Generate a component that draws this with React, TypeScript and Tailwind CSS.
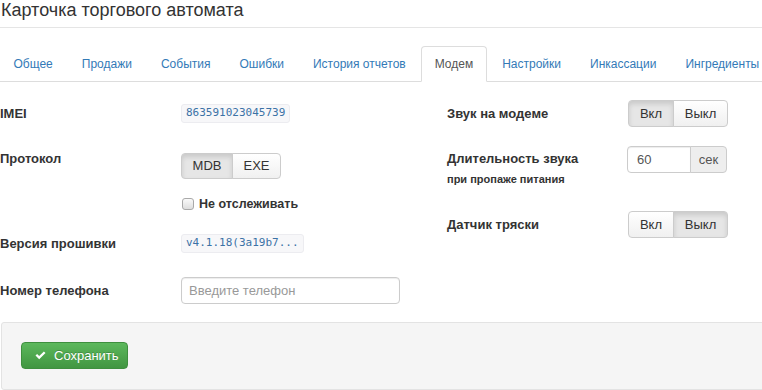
import React from 'react';

const tabs = ['Общее', 'Продажи', 'События', 'Ошибки', 'История отчетов', 'Модем', 'Настройки', 'Инкассации', 'Ингредиенты'];

const Code = ({ children }: { children: React.ReactNode }) => (
    <span className="inline-flex h-[19px] items-center rounded-[3px] border border-[#ececf0] bg-[#f7f7f9] px-[4px] font-['DejaVu_Sans_Mono',monospace] text-[11px] text-[#3b72a6]">
        {children}
    </span>
);

const Toggle = ({ options, active, widths }: { options: string[]; active: number; widths: string[] }) => (
    <div className="flex h-[27px]">
        {options.map((o, i) => (
            <button
                key={o}
                className={
                    'flex items-center justify-center border border-[#ccc] text-[13px] text-[#333] ' +
                    widths[i] +
                    (i === 0 ? ' rounded-l-[4px]' : ' -ml-px rounded-r-[4px]') +
                    (i === active
                        ? ' bg-[#e6e6e6] shadow-[inset_0_3px_5px_rgba(0,0,0,0.125)]'
                        : ' bg-gradient-to-b from-white to-[#f0f0f0]')
                }
            >
                {o}
            </button>
        ))}
    </div>
);

const Label = ({ children }: { children: React.ReactNode }) => (
    <div className="w-[181px] shrink-0 text-[13px] font-bold leading-[18px] text-[#333]">{children}</div>
);

export default function App() {
    return (
        <div className="w-[762px] h-[390px] overflow-hidden bg-white font-['Liberation_Sans',Arial,sans-serif] text-[#333]">
            {/* Header */}
            <div className="h-[28px] border-b border-[#e5e5e5]">
                <h1 className="pl-px text-[18px] leading-[20px] text-[#333]">Карточка торгового автомата</h1>
            </div>

            {/* Tabs */}
            <div className="mt-[18px] flex flex-nowrap whitespace-nowrap border-b border-[#ddd]">
                {tabs.map((t) => (
                    <div
                        key={t}
                        className={
                            'mr-[2px] -mb-px px-[12.5px] py-[8px] text-[12px] leading-[18px] rounded-t-[4px] border ' +
                            (t === 'Модем'
                                ? 'border-[#ddd] border-b-white bg-white text-[#555]'
                                : 'border-transparent text-[#337ab7]')
                        }
                    >
                        {t}
                    </div>
                ))}
            </div>

            {/* Form */}
            <div className="flex">
                <div className="w-[447px] shrink-0">
                    <div className="mt-[22px] flex h-[19px] items-center">
                        <Label>IMEI</Label>
                        <Code>863591023045739</Code>
                    </div>
                    <div className="mt-[27px] flex items-start">
                        <Label>Протокол</Label>
                        <div className="mt-[3px]">
                            <Toggle options={['MDB', 'EXE']} active={0} widths={['w-[52px] h-[26px]', 'w-[49px] h-[26px]']} />
                        </div>
                    </div>
                    <div className="mt-[15px] flex h-[18px] items-center pl-[182px]">
                        <span className="mr-[5px] h-[12px] w-[12px] rounded-[3px] border border-[#a9a9a9] bg-gradient-to-b from-[#fafafa] to-[#dedede]" />
                        <span className="text-[12.5px] font-bold">Не отслеживать</span>
                    </div>
                    <div className="mt-[21px] flex h-[19px] items-center">
                        <Label>Версия прошивки</Label>
                        <Code>v4.1.18(3a19b7...</Code>
                    </div>
                    <div className="mt-[24px] flex h-[27px] items-center">
                        <Label>Номер телефона</Label>
                        <input
                            placeholder="Введите телефон"
                            className="h-[27px] w-[219px] rounded-[4px] border border-[#ccc] px-[7px] text-[13px] text-[#555] shadow-[inset_0_1px_1px_rgba(0,0,0,0.075)] outline-none placeholder:text-[#999]"
                        />
                    </div>
                </div>

                <div className="flex-1">
                    <div className="mt-[18px] flex h-[27px] items-center">
                        <Label>Звук на модеме</Label>
                        <Toggle options={['Вкл', 'Выкл']} active={0} widths={['w-[46px]', 'w-[55px]']} />
                    </div>
                    <div className="mt-[19px] flex items-start">
                        <div className="w-[180px] shrink-0 pt-[4px] font-bold text-[#333]">
                            <div className="text-[13px] leading-[18px]">Длительность звука</div>
                            <div className="mt-[4px] text-[11px] leading-[14px]">при пропаже питания</div>
                        </div>
                        <div className="flex h-[27px]">
                            <input
                                defaultValue="60"
                                className="h-[27px] w-[64px] rounded-l-[4px] border border-[#ccc] px-[9px] text-[13px] text-[#555] shadow-[inset_0_1px_1px_rgba(0,0,0,0.075)] outline-none"
                            />
                            <span className="-ml-px flex h-[27px] w-[37px] items-center justify-center rounded-r-[4px] border border-[#ccc] bg-[#eee] text-[13px] text-[#555]">
                                сек
                            </span>
                        </div>
                    </div>
                    <div className="mt-[25px] flex h-[27px] items-center">
                        <Label>Датчик тряски</Label>
                        <Toggle options={['Вкл', 'Выкл']} active={1} widths={['w-[46px]', 'w-[55px]']} />
                    </div>
                </div>
            </div>

            {/* Footer */}
            <div className="ml-px mt-[18px] w-[770px] rounded-[3px] border border-[#e3e3e3] bg-[#f5f5f5] px-[19px] pt-[19px] pb-[20px]">
                <button className="flex h-[27px] w-[107px] items-center rounded-[4px] border border-[#3e8f3e] bg-gradient-to-b from-[#5cb85c] to-[#419641] pl-[13px] text-[13px] text-white [text-shadow:0_-1px_0_rgba(0,0,0,0.2)]">
                    <svg width="11" height="9" viewBox="0 0 11 9" className="mr-[8px]">
                        <path d="M0.5 4.6 L2.1 3 L4.2 5.1 L8.9 0.4 L10.5 2 L4.2 8.3 Z" fill="white" />
                    </svg>
                    Сохранить
                </button>
            </div>
        </div>
    );
}
